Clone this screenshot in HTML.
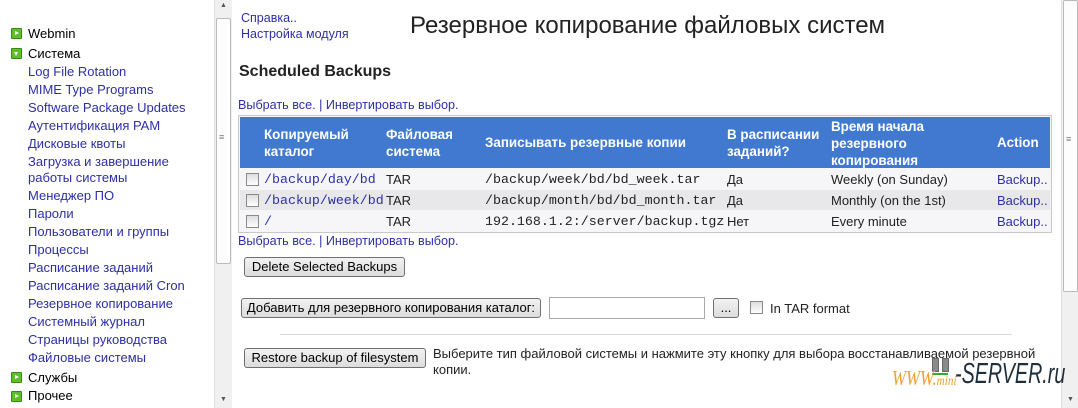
<!DOCTYPE html>
<html><head><meta charset="utf-8"><style>
body{margin:0;width:1078px;height:408px;overflow:hidden;background:#fff;font-family:"Liberation Sans","DejaVu Sans",sans-serif;font-size:13px;color:#222;position:relative}
.a{position:absolute;white-space:nowrap}
.lk{color:#2d2fa6}
.side div{position:absolute;left:28px;white-space:nowrap;color:#2d2fa6}
.side div.t{color:#000}
.ic{position:absolute;left:11px;width:9px;height:9px;border:1px solid #3a8a18;background:#5fbf2a;border-radius:1px}
.ic:after{content:"";position:absolute;left:3px;top:2px;border-left:4px solid #fff;border-top:2.5px solid transparent;border-bottom:2.5px solid transparent}
.ic.d:after{left:2px;top:3px;border-top:4px solid #fff;border-left:2.5px solid transparent;border-right:2.5px solid transparent;border-bottom:0}
.sb{position:absolute;top:0;width:17px;height:408px;background:#f0f0f0;border-left:1px solid #e0e0e0}
.th{position:absolute;background:#fdfdfd;border:1px solid #bbb;border-radius:2px;width:13px}
.btn{position:absolute;border:1px solid #707070;border-radius:3px;background:linear-gradient(#f2f2f2,#dcdcdc);font-size:13px;text-align:center;line-height:18px;color:#000}
.cb{position:absolute;width:11px;height:11px;border:1px solid #8a8a8a;background:linear-gradient(#ddd,#fff)}
.mono{font-family:"Liberation Mono",monospace;font-size:13.3px}
.hd{position:absolute;color:#fff;font-weight:bold;font-size:13.4px;line-height:17px}
</style></head><body>
<div class="side">
<span class="ic" style="top:28px"></span><div class="t" style="top:26px">Webmin</div>
<span class="ic d" style="top:48px"></span><div class="t" style="top:46px">Система</div>
<div style="top:64px">Log File Rotation</div>
<div style="top:82px">MIME Type Programs</div>
<div style="top:100px">Software Package Updates</div>
<div style="top:118px">Аутентификация PAM</div>
<div style="top:136px">Дисковые квоты</div>
<div style="top:154px">Загрузка и завершение</div>
<div style="top:170px">работы системы</div>
<div style="top:188px">Менеджер ПО</div>
<div style="top:206px">Пароли</div>
<div style="top:224px">Пользователи и группы</div>
<div style="top:242px">Процессы</div>
<div style="top:260px">Расписание заданий</div>
<div style="top:278px">Расписание заданий Cron</div>
<div style="top:296px">Резервное копирование</div>
<div style="top:314px">Системный журнал</div>
<div style="top:332px">Страницы руководства</div>
<div style="top:350px">Файловые системы</div>
<span class="ic" style="top:372px"></span><div class="t" style="top:370px">Службы</div>
<span class="ic" style="top:391px"></span><div class="t" style="top:388px">Прочее</div>
</div>
<div class="sb" style="left:214px"><div class="th" style="left:1px;top:18px;height:244px"></div><div class="a" style="left:4px;top:132px;font-size:9px;color:#777">≡</div><div class="a" style="left:5px;top:2px;font-size:7px;color:#555">▲</div><div class="a" style="left:5px;top:396px;font-size:7px;color:#555">▼</div></div>
<div class="sb" style="left:1061px"><div class="th" style="left:1px;top:0;height:290px"></div><div class="a" style="left:4px;top:134px;font-size:9px;color:#777">≡</div><div class="a" style="left:5px;top:396px;font-size:7px;color:#555">▼</div></div>

<div class="a lk" style="left:241px;top:11px;font-size:12.5px">Справка..</div>
<div class="a lk" style="left:241px;top:27px;font-size:12.5px">Настройка модуля</div>
<div class="a" style="left:410px;top:12px;font-size:24px;color:#222">Резервное копирование файловых систем</div>
<div class="a" style="left:239px;top:63px;font-size:16px;font-weight:bold;color:#222">Scheduled Backups</div>
<div class="a" style="left:238px;top:98px;color:#2d2fa6;font-size:12.6px">Выбрать все. | Инвертировать выбор.</div>

<div class="a" style="left:238px;top:115px;width:812px;height:116px;border:1px solid #c8c8c8;background:#f6f6f8"></div>
<div class="a" style="left:240px;top:117px;width:810px;height:51px;background:#4179d0"></div>
<div class="hd" style="left:264px;top:126px">Копируемый<br>каталог</div>
<div class="hd" style="left:386px;top:126px">Файловая<br>система</div>
<div class="hd" style="left:485px;top:134px">Записывать резервные копии</div>
<div class="hd" style="left:727px;top:126px">В расписании<br>заданий?</div>
<div class="hd" style="left:831px;top:118px">Время начала<br>резервного<br>копирования</div>
<div class="hd" style="left:997px;top:134px">Action</div>
<div class="a" style="left:240px;top:190px;width:810px;height:20px;background:#e8e8ea"></div>

<span class="cb" style="left:246px;top:173px"></span><span class="cb" style="left:246px;top:194px"></span><span class="cb" style="left:246px;top:215px"></span>
<div class="a mono lk" style="left:264px;top:172px">/backup/day/bd</div>
<div class="a mono lk" style="left:264px;top:193px">/backup/week/bd</div>
<div class="a mono lk" style="left:264px;top:214px">/</div>
<div class="a" style="left:386px;top:172px">TAR</div><div class="a" style="left:386px;top:193px">TAR</div><div class="a" style="left:386px;top:214px">TAR</div>
<div class="a mono" style="left:485px;top:172px">/backup/week/bd/bd_week.tar</div>
<div class="a mono" style="left:485px;top:193px">/backup/month/bd/bd_month.tar</div>
<div class="a mono" style="left:485px;top:214px">192.168.1.2:/server/backup.tgz</div>
<div class="a" style="left:727px;top:172px">Да</div><div class="a" style="left:727px;top:193px">Да</div><div class="a" style="left:727px;top:214px">Нет</div>
<div class="a" style="left:831px;top:172px">Weekly (on Sunday)</div><div class="a" style="left:831px;top:193px">Monthly (on the 1st)</div><div class="a" style="left:831px;top:214px">Every minute</div>
<div class="a lk" style="left:997px;top:172px">Backup..</div><div class="a lk" style="left:997px;top:193px">Backup..</div><div class="a lk" style="left:997px;top:214px">Backup..</div>
<div class="a" style="left:238px;top:234px;color:#2d2fa6;font-size:12.6px">Выбрать все. | Инвертировать выбор.</div>

<div class="btn" style="left:244px;top:257px;width:159px">Delete Selected Backups</div>
<div class="btn" style="left:241px;top:298px;width:298px">Добавить для резервного копирования каталог:</div>
<div class="a" style="left:549px;top:297px;width:154px;height:20px;border:1px solid #aaa"></div>
<div class="btn" style="left:713px;top:298px;width:24px">...</div>
<span class="cb" style="left:750px;top:301px"></span>
<div class="a" style="left:770px;top:301px">In TAR format</div>
<div class="a" style="left:280px;top:334px;width:732px;height:1px;background:#d8d8d8"></div>
<div class="btn" style="left:244px;top:348px;width:180px">Restore backup of filesystem</div>
<div class="a" style="left:433px;top:346px">Выберите тип файловой системы и нажмите эту кнопку для выбора восстанавливаемой резервной</div>
<div class="a" style="left:433px;top:362px">копии.</div>
<div class="a" style="left:932px;top:358px;width:5px;height:12px;background:#8a8a8a;border:1px solid #666"></div>
<div class="a" style="left:942px;top:358px;width:5px;height:12px;background:#8a8a8a;border:1px solid #666"></div>
<div class="a" style="left:932px;top:373px;width:16px;height:2px;background:#3a3"></div>
<div class="a" style="left:892px;top:366px;font-family:'Liberation Serif',serif;font-style:italic;font-size:21px;color:#f0a030;transform:scaleX(0.8);transform-origin:left">WWW.<span style="font-size:14px">mini</span></div>
<div class="a" style="left:955px;top:358px;font-style:italic;font-size:29px;color:#1e2e3a;transform:scaleX(0.68);transform-origin:left">-SERVER.ru</div>
</body></html>
